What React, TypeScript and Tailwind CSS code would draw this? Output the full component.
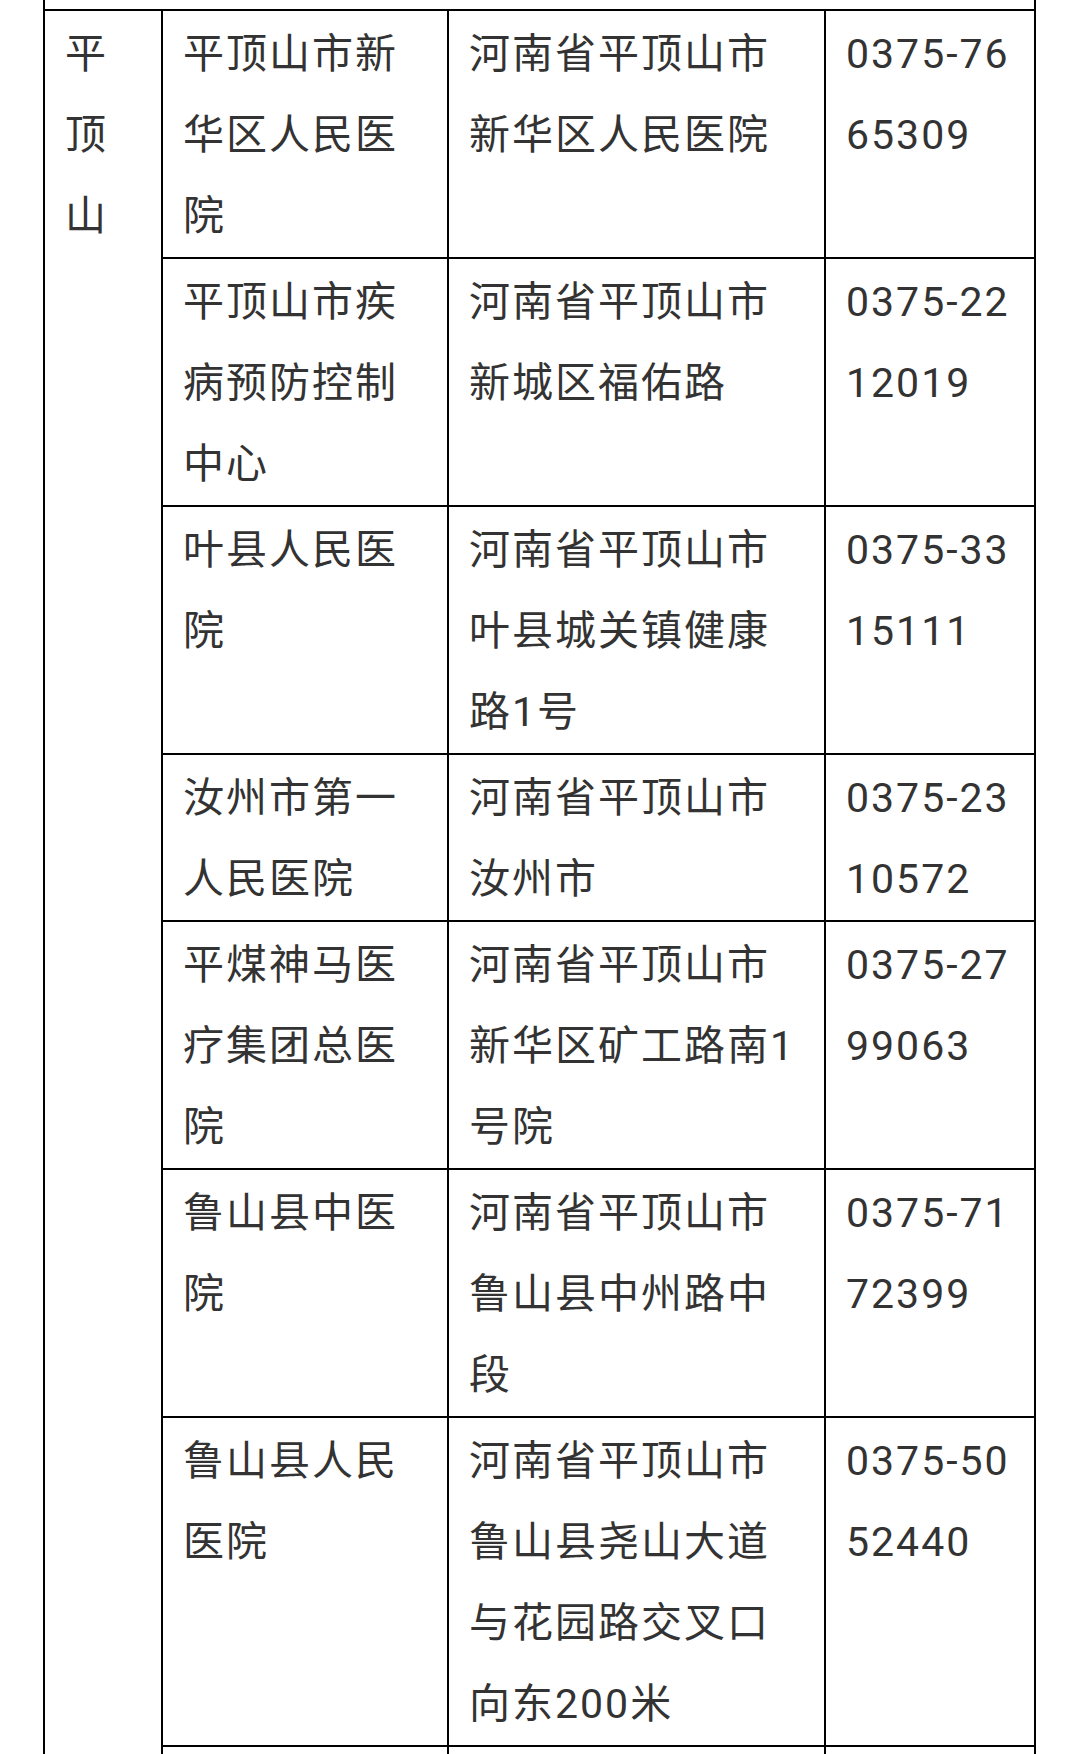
import React from "react";

type Row = { name: string[]; addr: string[]; tel: string[] };

const rows: Row[] = [
  { name: ["平顶山市新", "华区人民医", "院"], addr: ["河南省平顶山市", "新华区人民医院"], tel: ["0375-76", "65309"] },
  { name: ["平顶山市疾", "病预防控制", "中心"], addr: ["河南省平顶山市", "新城区福佑路"], tel: ["0375-22", "12019"] },
  { name: ["叶县人民医", "院"], addr: ["河南省平顶山市", "叶县城关镇健康", "路1号"], tel: ["0375-33", "15111"] },
  { name: ["汝州市第一", "人民医院"], addr: ["河南省平顶山市", "汝州市"], tel: ["0375-23", "10572"] },
  { name: ["平煤神马医", "疗集团总医", "院"], addr: ["河南省平顶山市", "新华区矿工路南1", "号院"], tel: ["0375-27", "99063"] },
  { name: ["鲁山县中医", "院"], addr: ["河南省平顶山市", "鲁山县中州路中", "段"], tel: ["0375-71", "72399"] },
  { name: ["鲁山县人民", "医院"], addr: ["河南省平顶山市", "鲁山县尧山大道", "与花园路交叉口", "向东200米"], tel: ["0375-50", "52440"] },
];

function Lines({ lines }: { lines: string[] }) {
  return (
    <>
      {lines.map((l, i) => (
        <div key={i} className="whitespace-nowrap">
          {l}
        </div>
      ))}
    </>
  );
}

const cell = "border-2 border-black align-top pl-[20px] pr-0 pt-[3px] pb-0";

export default function App() {
  return (
    <div
      className="w-[1080px] h-[1754px] overflow-hidden bg-white text-[#333333] text-[41px] leading-[81px] tracking-[2px]"
      style={{ fontFamily: '"Roboto", "Noto Sans CJK SC", sans-serif' }}
    >
      <table className="ml-[43px] w-[991px] table-fixed border-collapse">
        <colgroup>
          <col className="w-[118px]" />
          <col className="w-[286px]" />
          <col className="w-[377px]" />
          <col className="w-[210px]" />
        </colgroup>
        <tbody>
          <tr>
            <td colSpan={4} className="border-2 border-t-0 border-black p-0 h-[10px] leading-none"></td>
          </tr>
          <tr>
            <td rowSpan={8} className={cell}>
              <Lines lines={["平", "顶", "山"]} />
            </td>
            <td className={cell}>
              <Lines lines={rows[0].name} />
            </td>
            <td className={cell}>
              <Lines lines={rows[0].addr} />
            </td>
            <td className={cell}>
              <Lines lines={rows[0].tel} />
            </td>
          </tr>
          {rows.slice(1).map((r, i) => (
            <tr key={i}>
              <td className={cell}>
                <Lines lines={r.name} />
              </td>
              <td className={cell}>
                <Lines lines={r.addr} />
              </td>
              <td className={cell}>
                <Lines lines={r.tel} />
              </td>
            </tr>
          ))}
          <tr>
            <td className={cell + " h-[246px]"}></td>
            <td className={cell}></td>
            <td className={cell}></td>
          </tr>
        </tbody>
      </table>
    </div>
  );
}
